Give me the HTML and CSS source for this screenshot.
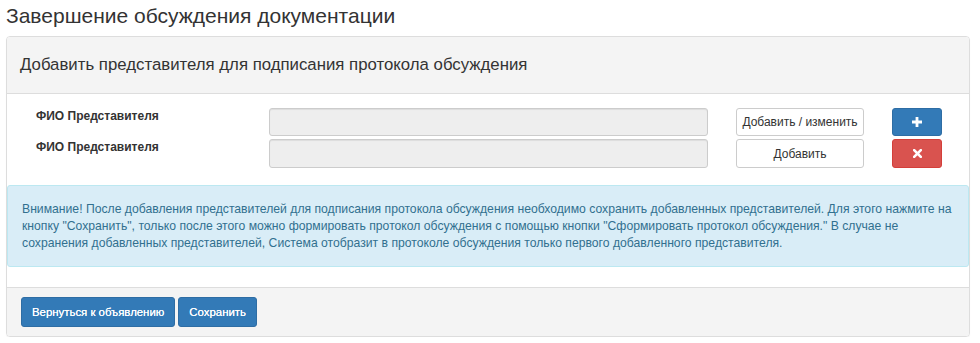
FILE: index.html
```html
<!DOCTYPE html>
<html lang="ru">
<head>
    <meta charset="UTF-8">
    <title>Завершение обсуждения документации</title>
    <link rel="stylesheet" href="styles.css">
</head>
<body>
    <h3 class="page-title">Завершение обсуждения документации</h3>
    <div class="panel">
        <div class="panel-heading">Добавить представителя для подписания протокола обсуждения</div>
        <div class="panel-body">
            <div class="rep-list">
                <div class="rep-row">
                    <label class="rep-label">ФИО Представителя</label>
                    <input class="rep-input" type="text" disabled>
                    <button class="btn btn-default">Добавить / изменить</button>
                    <button class="btn btn-primary btn-icon">
                        <svg width="10" height="10" viewBox="0 0 10 10"><path d="M3.6 0h2.8v3.6H10v2.8H6.4V10H3.6V6.4H0V3.6h3.6z" fill="#fff"/></svg>
                    </button>
                </div>
                <div class="rep-row">
                    <label class="rep-label">ФИО Представителя</label>
                    <input class="rep-input" type="text" disabled>
                    <button class="btn btn-default">Добавить</button>
                    <button class="btn btn-danger btn-icon">
                        <svg width="9" height="9" viewBox="0 0 9 9"><path d="M1.2 1.2l6.6 6.6M7.8 1.2l-6.6 6.6" stroke="#fff" stroke-width="2.6" stroke-linecap="square"/></svg>
                    </button>
                </div>
            </div>
            <div class="alert">
                Внимание! После добавления представителей для подписания протокола обсуждения необходимо сохранить добавленных представителей. Для этого нажмите на кнопку "Сохранить", только после этого можно формировать протокол обсуждения с помощью кнопки "Сформировать протокол обсуждения." В случае не сохранения добавленных представителей, Система отобразит в протоколе обсуждения только первого добавленного представителя.
            </div>
        </div>
        <div class="panel-footer">
            <button class="btn btn-primary btn-strong">Вернуться к объявлению</button>
            <button class="btn btn-primary btn-strong">Сохранить</button>
        </div>
    </div>
</body>
</html>
```

FILE: styles.css
```css
body {
    font-family: "Liberation Sans", Arial, sans-serif;
    font-size: 12px;
    line-height: 1.42857;
    color: #333;
    margin: 0;
    padding: 0 10px 0 6px;
    background: #fff;
}

.page-title {
    font-size: 21px;
    font-weight: normal;
    line-height: 1.1;
    margin: 4px 0 9px 0;
}

.panel {
    border: 1px solid #ddd;
    border-radius: 4px;
    box-shadow: 0 1px 1px rgba(0, 0, 0, 0.05);
}

.panel-heading {
    background: #f4f4f4;
    border-bottom: 1px solid #ddd;
    font-size: 16.8px;
    padding: 17px 13px 17px 13px;
    line-height: 22px;
    border-radius: 3px 3px 0 0;
}

.panel-body {
    padding: 14px 0 20px 0;
}

.rep-list {
    display: flex;
    flex-direction: column;
    gap: 3px;
    padding-left: 29px;
    margin-bottom: 17px;
}

.rep-row {
    display: grid;
    grid-template-columns: 205px 439px 128px 50px;
    column-gap: 28px;
    align-items: start;
}

.rep-row:last-child .rep-input,
.rep-row:last-child .btn {
    height: 29px;
}

.rep-label {
    font-weight: bold;
    line-height: 17px;
}

.rep-input {
    height: 28px;
    box-sizing: border-box;
    border: 1px solid #ccc;
    border-radius: 3px;
    background: #eee;
    box-shadow: inset 0 1px 1px rgba(0, 0, 0, 0.075);
    margin: 0;
}

.btn {
    font-family: inherit;
    font-size: 12px;
    height: 28px;
    box-sizing: border-box;
    border: 1px solid transparent;
    border-radius: 3px;
    padding: 0 4px;
    cursor: pointer;
    margin: 0;
    white-space: nowrap;
}

.btn-default {
    background: #fff;
    border-color: #ccc;
    color: #333;
}

.btn-primary {
    background: #337ab7;
    border-color: #2e6da4;
    color: #fff;
}

.btn-danger {
    background: #d9534f;
    border-color: #d43f3a;
    color: #fff;
}

.btn-icon {
    display: flex;
    align-items: center;
    justify-content: center;
}

.alert {
    background: #d9edf7;
    border: 1px solid #bce8f1;
    border-radius: 3px;
    color: #31708f;
    font-size: 12.2px;
    padding: 15px 14px 14px 14px;
    line-height: 17px;
}

.panel-footer {
    background: #f4f4f4;
    border-top: 1px solid #ddd;
    padding: 9px 14px 9px 14px;
    border-radius: 0 0 3px 3px;
    display: flex;
    gap: 3px;
}

.btn-strong {
    height: 30px;
    padding: 0 10px;
    font-size: 11.4px;
    text-shadow: 0 0 0.4px #fff;
}
```
